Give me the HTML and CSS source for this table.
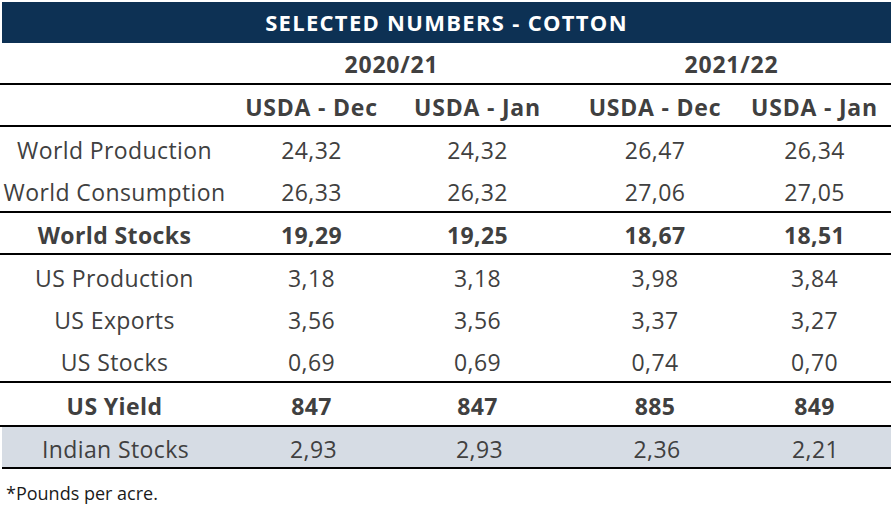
FILE: index.html
```html
<!DOCTYPE html>
<html>
<head>
<meta charset="utf-8">
<link rel="stylesheet" href="styles.css">
</head>
<body>
<div class="table">
  <div class="title">SELECTED NUMBERS - COTTON</div>
  <div class="row years">
    <div class="year y1">2020/21</div>
    <div class="year y2">2021/22</div>
  </div>
  <div class="row grid head">
    <div></div>
    <div>USDA - Dec</div>
    <div>USDA - Jan</div>
    <div>USDA - Dec</div>
    <div class="last">USDA - Jan</div>
  </div>
  <div class="row grid">
    <div>World Production</div><div>24,32</div><div>24,32</div><div>26,47</div><div class="last">26,34</div>
  </div>
  <div class="row grid">
    <div>World Consumption</div><div>26,33</div><div>26,32</div><div>27,06</div><div class="last">27,05</div>
  </div>
  <div class="row grid bold bordered short">
    <div>World Stocks</div><div>19,29</div><div>19,25</div><div>18,67</div><div class="last">18,51</div>
  </div>
  <div class="row grid">
    <div>US Production</div><div>3,18</div><div>3,18</div><div>3,98</div><div class="last">3,84</div>
  </div>
  <div class="row grid">
    <div>US Exports</div><div>3,56</div><div>3,56</div><div>3,37</div><div class="last">3,27</div>
  </div>
  <div class="row grid">
    <div>US Stocks</div><div>0,69</div><div>0,69</div><div>0,74</div><div class="last">0,70</div>
  </div>
  <div class="row grid bold bordered">
    <div>US Yield</div><div>847</div><div>847</div><div>885</div><div class="last">849</div>
  </div>
  <div class="row grid shaded short">
    <div>Indian Stocks</div><div>2,93</div><div>2,93</div><div>2,36</div><div class="last">2,21</div>
  </div>
  <div class="note">*Pounds per acre.</div>
</div>
</body>
</html>
```

FILE: styles.css
```css
html, body {
  margin: 0;
  padding: 0;
  background: #ffffff;
}
body {
  font-family: "Open Sans", "Liberation Sans", sans-serif;
  color: #404040;
}
.table {
  width: 891px;
  padding-top: 2px;
}
.title {
  margin-left: 2px;
  height: 41px;
  background: #0d3154;
  color: #ffffff;
  font-weight: 700;
  font-size: 22px;
  letter-spacing: 1.3px;
  display: flex;
  align-items: center;
  justify-content: center;
  padding-bottom: 1px;
  box-sizing: border-box;
}
.row {
  height: 42px;
  font-size: 23px;
  letter-spacing: 0.4px;
}
.years {
  display: grid;
  grid-template-columns: 229px 332px 1fr;
  border-bottom: 2px solid #000;
  height: 40px;
  font-weight: 700;
  letter-spacing: 0.8px;
}
.year {
  display: flex;
  align-items: center;
  justify-content: center;
  padding-top: 2px;
}
.y1 { grid-column: 2; padding-right: 7px; }
.y2 { grid-column: 3; padding-left: 11px; }
.grid {
  display: grid;
  grid-template-columns: 229px 165px 167px 188px 1fr;
}
.grid > div {
  display: flex;
  align-items: center;
  justify-content: center;
  padding-top: 3px;
}
.grid > .last { padding-right: 11px; }
.head {
  font-weight: 700;
  letter-spacing: 0.8px;
  height: 40px;
  border-bottom: 2px solid #000;
}
.bold { font-weight: 700; }
.bordered {
  border-top: 2px solid #000;
  border-bottom: 2px solid #000;
}
.short { height: 40px; }
.shaded {
  margin-left: 2px;
  background: #d6dce4;
  border-bottom: 2px solid #000;
}
.shaded > div:first-child { margin-left: -2px; }
.note {
  font-size: 18px;
  color: #1a1a1a;
  padding: 12px 0 0 6px;
}
```
